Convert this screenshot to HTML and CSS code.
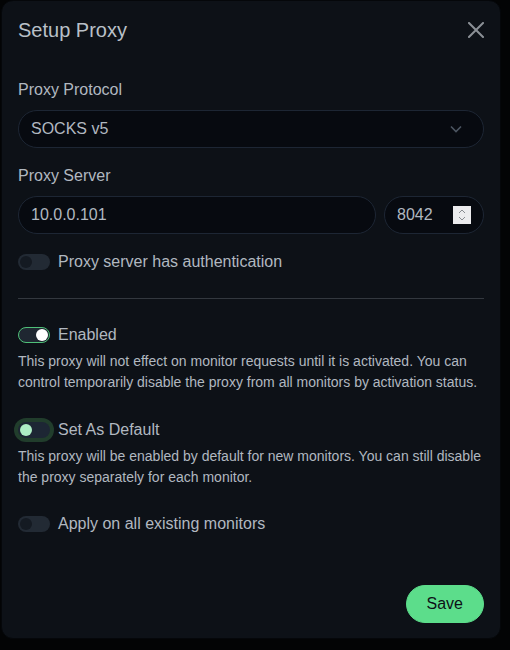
FILE: index.html
```html
<!DOCTYPE html>
<html lang="en">
<head>
<meta charset="utf-8">
<title>Setup Proxy</title>
<link rel="stylesheet" href="styles.css">
</head>
<body>
<div class="modal">
  <div class="modal-header">
    <h5 class="modal-title">Setup Proxy</h5>
    <button class="btn-close" type="button" aria-label="Close">
      <svg width="16" height="16" viewBox="0 0 16 16"><path d="M1 1L15 15M15 1L1 15" stroke="#8b9096" stroke-width="2" stroke-linecap="square" fill="none"/></svg>
    </button>
  </div>
  <div class="modal-body">
    <div class="field">
      <label class="form-label">Proxy Protocol</label>
      <div class="form-control select">
        <span>SOCKS v5</span>
        <svg class="chev" width="12" height="8" viewBox="0 0 12 8"><path d="M1 1.5L6 6.5L11 1.5" stroke="#4c5561" stroke-width="1.6" fill="none"/></svg>
      </div>
    </div>
    <div class="field">
      <label class="form-label">Proxy Server</label>
      <div class="server-row">
        <div class="form-control host">10.0.0.101</div>
        <div class="form-control port">
          <span>8042</span>
          <span class="spin">
            <svg width="18" height="18" viewBox="0 0 18 18"><path d="M6 7L9 4L12 7M6 11L9 14L12 11" stroke="#8a8d92" stroke-width="1" fill="none"/></svg>
          </span>
        </div>
      </div>
    </div>
    <div class="check-row">
      <span class="switch"></span>
      <span class="check-label">Proxy server has authentication</span>
    </div>
    <hr class="divider">
    <div class="check-row first">
      <span class="switch on"></span>
      <span class="check-label">Enabled</span>
    </div>
    <div class="form-text">This proxy will not effect on monitor requests until it is activated. You can control temporarily disable the proxy from all monitors by activation status.</div>
    <div class="check-row spaced">
      <span class="switch focus"></span>
      <span class="check-label">Set As Default</span>
    </div>
    <div class="form-text">This proxy will be enabled by default for new monitors. You can still disable the proxy separately for each monitor.</div>
    <div class="check-row spaced2">
      <span class="switch"></span>
      <span class="check-label">Apply on all existing monitors</span>
    </div>
  </div>
  <div class="modal-footer">
    <button class="btn-save" type="button">Save</button>
  </div>
</div>
</body>
</html>
```
FILE: styles.css
```css
* { box-sizing: border-box; }
html, body { margin: 0; padding: 0; }
body {
  background: #030405;
  font-family: "Liberation Sans", Arial, sans-serif;
  color: #b1b8c0;
  font-size: 16px;
  line-height: 1.5;
  height: 650px;
  overflow: hidden;
}
.modal {
  width: 500px;
  margin-left: 1px;
  background: #0d1117;
  border: 1px solid #05070a;
  border-radius: 12px;
}
.modal-header {
  display: flex;
  align-items: center;
  justify-content: space-between;
  padding: 14px 16px 16px 16px;
}
.modal-title {
  margin: 0;
  font-size: 20px;
  font-weight: 400;
  line-height: 30px;
  color: #b9c0c8;
}
.btn-close {
  background: none;
  border: 0;
  padding: 0;
  width: 16px;
  height: 16px;
  margin-right: 0;
  display: flex;
}
.modal-body {
  padding: 17px 16px 33px 16px;
}
.field { margin-bottom: 16px; }
.form-label {
  display: block;
  margin-bottom: 8px;
  line-height: 24px;
}
.form-control {
  height: 38px;
  background: #070a10;
  border: 1px solid #1d2634;
  border-radius: 19px;
  padding: 6px 12px;
  line-height: 24px;
  color: #b1b8c0;
}
.select {
  display: flex;
  align-items: center;
  justify-content: space-between;
}
.chev { margin-right: 9px; }
.server-row {
  display: flex;
  gap: 8px;
}
.host { flex: 1; }
.port {
  width: 100px;
  display: flex;
  align-items: center;
  justify-content: space-between;
}
.spin {
  width: 18px;
  height: 18px;
  background: #ececee;
  display: flex;
}
.check-row {
  display: flex;
  align-items: flex-start;
  gap: 8px;
  line-height: 24px;
}
.check-row.first { margin-top: 24px; }
.check-row.spaced { margin-top: 25px; }
.check-row.spaced2 { margin-top: 24px; }
.switch {
  position: relative;
  width: 32px;
  height: 16px;
  margin-top: 4px;
  border-radius: 8px;
  background: #222a34;
  flex: none;
}
.switch::after {
  content: "";
  position: absolute;
  left: 2px;
  top: 2px;
  width: 12px;
  height: 12px;
  border-radius: 50%;
  background: #141a22;
}
.switch.on {
  background: #1f2731;
  border: 1px solid #4fbf78;
}
.switch.on::after {
  left: auto;
  right: 1px;
  top: 1px;
  background: #ffffff;
}
.switch.focus {
  background: #1d2634;
  box-shadow: 0 0 0 4px #213d2c;
}
.switch.focus::after {
  background: #aeeec5;
}
.divider {
  margin: 24px 0 0 0;
  border: 0;
  border-top: 1px solid #33383f;
  height: 0;
}
.form-text {
  margin-top: 4px;
  font-size: 14px;
  line-height: 21px;
  color: #b1b8c0;
}
.modal-footer {
  display: flex;
  justify-content: flex-end;
  padding: 12px 12px 11px 12px;
}
.btn-save {
  margin: 4px;
  background: #5cdd8b;
  border: 1px solid #5cdd8b;
  border-radius: 19px;
  padding: 6px 20px;
  font-family: "Liberation Sans", Arial, sans-serif;
  font-size: 16px;
  line-height: 24px;
  color: #0d1117;
}
```
